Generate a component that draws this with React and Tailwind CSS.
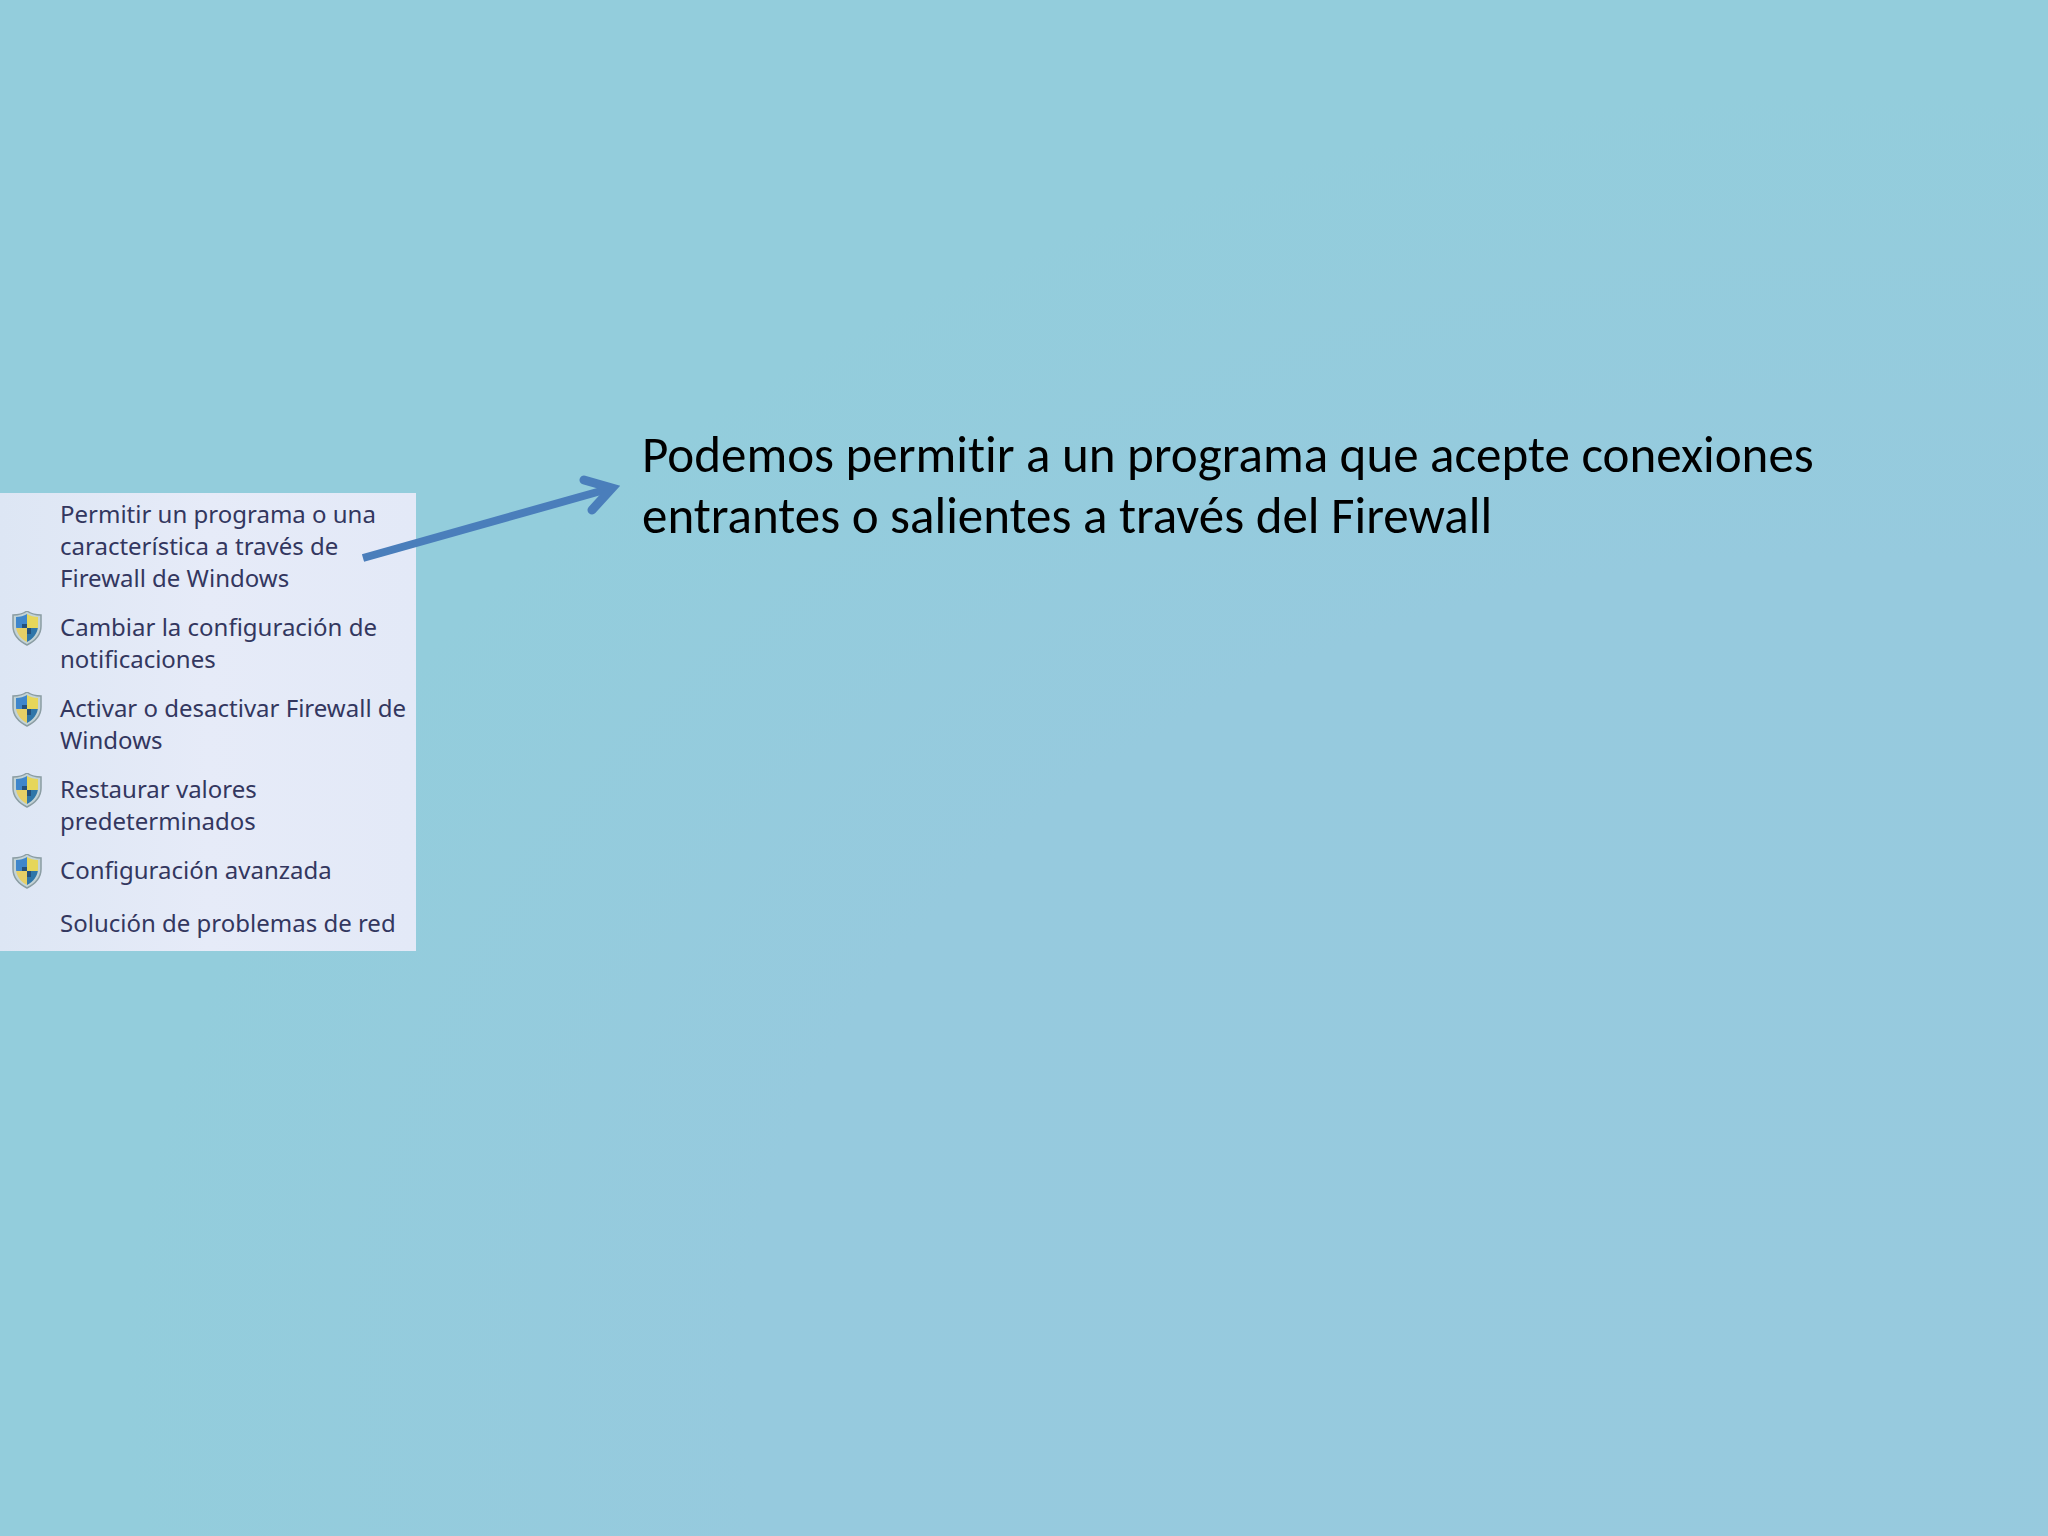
import { useId } from "react";

const MENU_ITEMS = [
  { label: "Permitir un programa o una característica a través de Firewall de Windows", shield: false },
  { label: "Cambiar la configuración de notificaciones", shield: true },
  { label: "Activar o desactivar Firewall de Windows", shield: true },
  { label: "Restaurar valores predeterminados", shield: true },
  { label: "Configuración avanzada", shield: true },
  { label: "Solución de problemas de red", shield: false },
];

function ShieldIcon() {
  const id = useId();
  const outline = "M15 1 C19 4 24 5 29 5 V16 C29 25 23 31 15 35 C7 31 1 25 1 16 V5 C6 5 11 4 15 1 Z";
  const inner = "M15 4 C18 6 22 7 26 7 V16 C26 23 21 29 15 32 C9 29 4 23 4 16 V7 C8 7 12 6 15 4 Z";

  return (
    <svg viewBox="0 1 30 36" className="w-[30px] h-9" aria-hidden="true">
      <defs>
        <clipPath id={id}>
          <path d={inner} />
        </clipPath>
      </defs>
      <path d={outline} fill="#c3d3d6" stroke="#8b9da3" strokeWidth="1.5" />
      <g clipPath={`url(#${id})`}>
        <rect x="0" y="0" width="15" height="18" fill="#3f86cb" />
        <rect x="15" y="0" width="15" height="18" fill="#e6d65a" />
        <rect x="0" y="18" width="15" height="18" fill="#e6cf66" />
        <rect x="15" y="18" width="15" height="18" fill="#2f76a9" />
        <path d="M10 14 H15 V18 H10 Z M15 18 H19 V24 H15 Z" fill="#24507c" />
      </g>
    </svg>
  );
}

function MenuItem({ label, shield }) {
  return (
    <li>
      <a href="#" className="flex items-start">
        <span className="w-[60px] shrink-0 pl-3">{shield && <ShieldIcon />}</span>
        <span className="flex-1">{label}</span>
      </a>
    </li>
  );
}

function Arrow() {
  return (
    <svg
      viewBox="0 0 264 96"
      className="absolute left-[360px] top-[-23px] w-[264px] h-24"
      fill="none"
      stroke="#4a7ebb"
      aria-hidden="true"
    >
      <path d="M3 88 L248 19" strokeWidth="8" />
      <path d="M224 10 L252 18 L232 40" strokeWidth="9" strokeLinecap="round" strokeMiterlimit="8" />
    </svg>
  );
}

export default function App() {
  return (
    <main className="min-h-screen flex items-start pt-[424px] bg-[#93cddd] bg-[radial-gradient(ellipse_at_90%_90%,#97cade_0%,#96cade_42%,#93cddc_66%)]">
      <div className="relative shrink-0 mt-[69px]">
        <nav className="w-[416px] pt-[5px] pb-3 bg-linear-to-r from-[#dde6f4] via-[#e6ebf8] to-[#e3e9f7]">
          <ul className="flex flex-col gap-[17px] font-['Noto_Sans',sans-serif] text-2xl leading-8 text-[#33375f]">
            {MENU_ITEMS.map((item) => (
              <MenuItem key={item.label} {...item} />
            ))}
          </ul>
        </nav>
        <Arrow />
      </div>

      <p className="ml-[226px] max-w-[1220px] font-[Carlito,Lato,sans-serif] text-[51px] leading-[61px] text-black [font-variant-ligatures:none]">
        Podemos permitir a un programa que acepte conexiones entrantes o salientes a través del Firewall
      </p>
    </main>
  );
}
